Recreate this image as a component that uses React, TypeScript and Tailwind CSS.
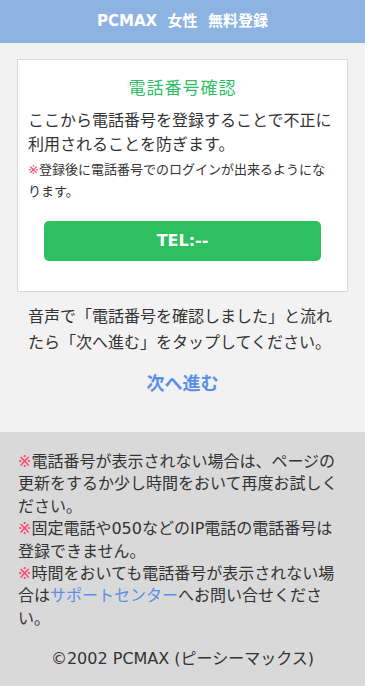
import React from "react";

export default function App() {
  return (
    <div
      className="min-h-[686px] w-full bg-[#f2f2f2] text-[#333333]"
      style={{ fontFamily: '"DejaVu Sans", "Noto Sans CJK JP", sans-serif' }}
    >
      <header className="flex h-[43px] items-center justify-center bg-[#8db3e2]">
        <h1 className="text-[15px] font-bold text-white">PCMAX&nbsp; 女性&nbsp; 無料登録</h1>
      </header>

      <main className="px-[17px] pt-[16px]">
        <section className="border border-[#d9d9d9] bg-white px-[10px] pt-[15px] pb-[30px]">
          <h2 className="text-center text-[17px] leading-[27px] tracking-[1px] text-[#2fbf66]">
            電話番号確認
          </h2>
          <p className="mt-[7px] text-[16px] leading-[24px]">
            ここから電話番号を登録することで不正に利用されることを防ぎます。
          </p>
          <p className="mt-[2px] text-[13px] leading-[22px]">
            <span className="text-[#ff3d6e]">※</span>登録後に電話番号でのログインが出来るようになります。
          </p>
          <div className="mx-[16px] mt-[18px] flex h-[40px] items-center justify-center rounded-[5px] bg-[#2ebf60]">
            <span className="text-[16px] font-bold text-white">TEL:--</span>
          </div>
        </section>

        <p className="mt-[12px] px-[11px] text-[16px] leading-[26px]">
          音声で「電話番号を確認しました」と流れたら「次へ進む」をタップしてください。
        </p>

        <div className="mt-[14px] text-center">
          <a className="text-[18px] font-bold leading-[27px] text-[#5b8fe6]">次へ進む</a>
        </div>
      </main>

      <footer className="mt-[35px] bg-[#d9d9d9] px-[18px] pt-[19px] pb-[17px]">
        <p className="text-[16px] leading-[22.4px]">
          <span className="text-[#ff3d6e]">※</span>電話番号が表示されない場合は、ページの更新をするか少し時間をおいて再度お試しください。
          <br />
          <span className="text-[#ff3d6e]">※</span>固定電話や050などのIP電話の電話番号は登録できません。
          <br />
          <span className="text-[#ff3d6e]">※</span>時間をおいても電話番号が表示されない場合は
          <a className="text-[#5b8fe6]">サポートセンター</a>へお問い合せください。
        </p>
        <p className="mt-[18px] text-center text-[16px] leading-[22px]">©2002 PCMAX (ピーシーマックス)</p>
      </footer>
    </div>
  );
}
